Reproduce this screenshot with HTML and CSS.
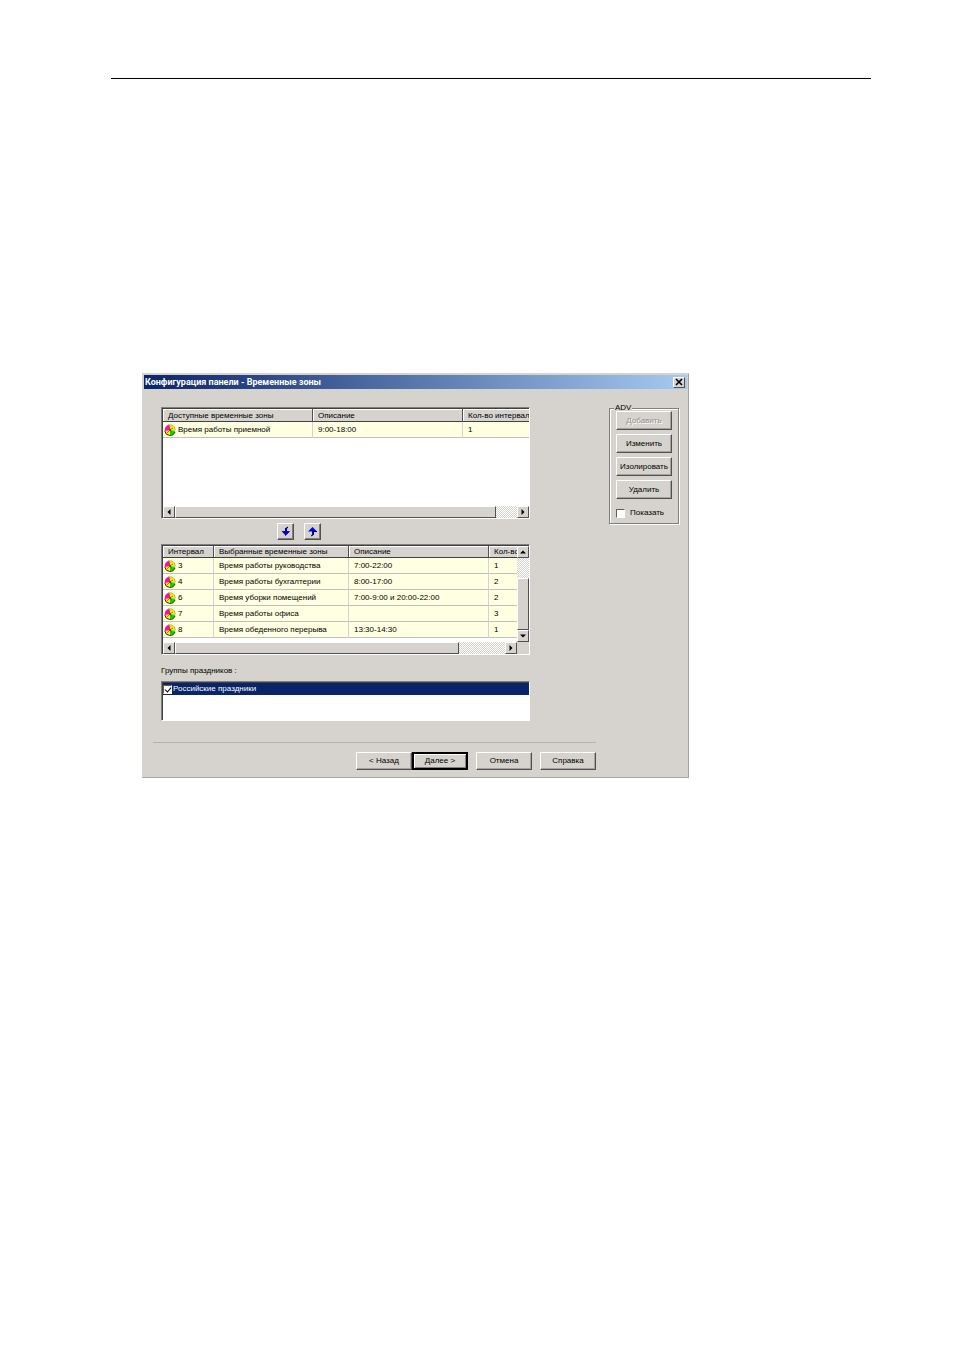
FILE: index.html
```html
<!DOCTYPE html>
<html lang="ru">
  <head>
    <meta charset="UTF-8" />
    <meta name="viewport" content="width=device-width, initial-scale=1.0" />
    <title>Конфигурация панели - Временные зоны</title>
    <link rel="stylesheet" href="styles.css">
  </head>
  <body>
    <!-- shared icons -->
    <svg class="defs" width="0" height="0">
      <symbol id="zone" viewBox="0 0 12 12">
        <circle cx="6" cy="6" r="5.3" fill="#f8f000" />
        <path d="M6 6L.8 7A5.300 5.300 0 0 1 5 .8z" fill="#ff00d8" />
        <path d="M6 6l5.200 1A5.300 5.300 0 0 1 6 11.300z" fill="#00e010" />
        <path d="M5 1l1 5 3-2M6 6l-3 3M6 6l2 3" stroke="#806000" stroke-width=".7" fill="none" />
        <circle cx="6" cy="6" r="1" fill="#902020" />
        <path d="M2 2.500A5.300 5.300 0 0 1 11.300 6" fill="none" stroke="#a09060" stroke-width=".7" />
        <path d="M.8 7A5.300 5.300 0 0 0 11 8" fill="none" stroke="#303018" stroke-width="1" />
      </symbol>
      <symbol id="left" viewBox="0 0 8 8"><path d="M5.500 1v6l-3-3z" /></symbol>
      <symbol id="right" viewBox="0 0 8 8"><path d="M2.500 1v6l3-3z" /></symbol>
      <symbol id="up" viewBox="0 0 8 8"><path d="M1 5.500h6l-3-3z" /></symbol>
      <symbol id="down" viewBox="0 0 8 8"><path d="M1 2.500h6l-3 3z" /></symbol>
    </svg>

    <div class="page">
      <hr class="page-rule">

      <div class="dialog">
        <div class="title-bar">
          <h1>Конфигурация панели - Временные зоны</h1>
          <button class="close-btn" aria-label="Закрыть">
            <svg width="8" height="8" viewBox="0 0 8 8"><path d="M1 1l6 6M7 1L1 7" stroke="#000" stroke-width="1.6" /></svg>
          </button>
        </div>

        <div class="content">
          <div class="lists">
            <div class="list available">
              <div class="view">
                <table>
                  <colgroup><col class="w-name"><col class="w-name"><col></colgroup>
                  <thead>
                    <tr><th>Доступные временные зоны</th><th>Описание</th><th>Кол-во интервал</th></tr>
                  </thead>
                  <tbody>
                    <tr><td class="with-icon"><svg class="zone"><use href="#zone" /></svg>Время работы приемной</td><td>9:00-18:00</td><td>1</td></tr>
                  </tbody>
                </table>
              </div>
              <div class="scroll-h">
                <button aria-label="Влево"><svg><use href="#left" /></svg></button>
                <div class="track"><div class="thumb thumb-wide"></div></div>
                <button aria-label="Вправо"><svg><use href="#right" /></svg></button>
              </div>
            </div>

            <div class="move">
              <button aria-label="Выбрать">
                <svg viewBox="0 0 11 11"><path d="M8 1L5 2.500V5H1.500L5.500 9.500 9.500 5H7V3z" fill="#0000f0" /><path d="M8 1L5.500 2.500V5.500M5 9.500L9.500 5.500" fill="none" stroke="#000050" stroke-width="1" /></svg>
              </button>
              <button aria-label="Вернуть">
                <svg viewBox="0 0 11 11"><path d="M5.500 1L10 5.500H7v3L4.500 10 5 8V5.500H1z" fill="#0000f0" /><path d="M6 5.500h4M6.500 5.500V8.500L4 10" fill="none" stroke="#000050" stroke-width="1" /></svg>
              </button>
            </div>

            <div class="list selected">
              <div class="view">
                <table>
                  <colgroup><col class="w-num"><col class="w-zone"><col class="w-desc"><col></colgroup>
                  <thead>
                    <tr><th>Интервал</th><th>Выбранные временные зоны</th><th>Описание</th><th>Кол-во</th></tr>
                  </thead>
                  <tbody>
                    <tr><td class="with-icon"><svg class="zone"><use href="#zone" /></svg>3</td><td>Время работы руководства</td><td>7:00-22:00</td><td>1</td></tr>
                    <tr><td class="with-icon"><svg class="zone"><use href="#zone" /></svg>4</td><td>Время работы бухгалтерии</td><td>8:00-17:00</td><td>2</td></tr>
                    <tr><td class="with-icon"><svg class="zone"><use href="#zone" /></svg>6</td><td>Время уборки помещений</td><td>7:00-9:00 и 20:00-22:00</td><td>2</td></tr>
                    <tr><td class="with-icon"><svg class="zone"><use href="#zone" /></svg>7</td><td>Время работы офиса</td><td></td><td>3</td></tr>
                    <tr><td class="with-icon"><svg class="zone"><use href="#zone" /></svg>8</td><td>Время обеденного перерыва</td><td>13:30-14:30</td><td>1</td></tr>
                  </tbody>
                </table>
              </div>
              <div class="scroll-v">
                <button aria-label="Вверх"><svg><use href="#up" /></svg></button>
                <div class="track"><div class="thumb"></div></div>
                <button aria-label="Вниз"><svg><use href="#down" /></svg></button>
              </div>
              <div class="scroll-h">
                <button aria-label="Влево"><svg><use href="#left" /></svg></button>
                <div class="track"><div class="thumb thumb-mid"></div></div>
                <button aria-label="Вправо"><svg><use href="#right" /></svg></button>
              </div>
            </div>

            <p class="groups-label">Группы праздников :</p>
            <div class="list groups">
              <label class="group-row"><input type="checkbox" checked>Российские праздники</label>
            </div>
          </div>

          <fieldset class="adv">
            <legend>ADV</legend>
            <button class="btn" disabled>Добавить</button>
            <button class="btn">Изменить</button>
            <button class="btn">Изолировать</button>
            <button class="btn">Удалить</button>
            <label class="show"><input type="checkbox">Показать</label>
          </fieldset>
        </div>

        <div class="footer">
          <div class="wizard">
            <button class="btn">&lt; Назад</button>
            <button class="btn default">Далее &gt;</button>
          </div>
          <button class="btn">Отмена</button>
          <button class="btn">Справка</button>
        </div>
      </div>
    </div>
  </body>
</html>
```

FILE: styles.css
```css
/* styles.css */
* {
  box-sizing: border-box;
}

body {
  margin: 0;
  background: #fff;
  color: #000;
  font-family: "Liberation Sans", Arial, sans-serif;
  font-size: 8px;
  line-height: 12px;
}

.defs {
  position: absolute;
}

.page {
  padding: 78px 83px 0 111px;
}

.page-rule {
  margin: 0 0 294px;
  border: 0;
  border-top: 1px solid #000;
}

.dialog {
  max-width: 547px;
  margin-left: 31px;
  padding: 1px;
  background: #d6d3ce;
  border: 1px solid #d6d3ce;
  border-right-color: #a5a2a0;
  border-bottom-color: #a5a2a0;
}

/* title */
.title-bar {
  display: flex;
  align-items: center;
  justify-content: space-between;
  height: 14px;
  padding: 0 2px 0 1px;
  background: linear-gradient(to right, #0a246a, #a6caf0);
}

.title-bar h1 {
  margin: 0;
  color: #fff;
  font-family: Roboto, sans-serif;
  font-size: 9px;
  line-height: 14px;
  white-space: nowrap;
}

button {
  display: flex;
  align-items: center;
  justify-content: center;
  padding: 0;
  background: #d6d3ce;
  border: 1px solid;
  border-color: #fff #505050 #505050 #fff;
  border-radius: 0;
  color: #000;
  font: inherit;
}

.close-btn {
  width: 12px;
  height: 11px;
}

/* layout */
.content {
  display: grid;
  grid-template-columns: minmax(0, 369px) 70px;
  justify-content: space-between;
  align-items: start;
  padding: 12px 8px 0 17px;
}

.lists {
  padding-top: 6px;
}

/* lists */
.list {
  background: #fff;
  border: 1px solid;
  border-color: #808080 #fff #fff #808080;
  box-shadow: inset 1px 1px #404040;
}

.list .view {
  overflow: hidden;
  margin: 1px 0 0 1px;
}

.available .view {
  height: 97px;
}

table {
  width: 460px;
  table-layout: fixed;
  border-spacing: 0;
}

.w-name {
  width: 150px;
}

.w-num {
  width: 51px;
}

.w-zone {
  width: 135px;
}

.w-desc {
  width: 140px;
}

th,
td {
  padding: 0 5px;
  overflow: hidden;
  text-align: left;
  white-space: nowrap;
}

th {
  height: 12px;
  padding-top: 1px;
  background: #d6d3ce;
  border-right: 1px solid #505050;
  border-bottom: 1px solid #404040;
  box-shadow: inset 1px 1px #fff;
  font-weight: normal;
  line-height: 10px;
}

.available th {
  height: 13px;
  padding-top: 2px;
}

td {
  height: 16px;
  background: #ffffe1;
  border-right: 1px solid #d6d3ce;
  border-bottom: 1px solid #c0c0c0;
  line-height: 15px;
}

.with-icon {
  padding-left: 1px;
}

.zone {
  width: 12px;
  height: 12px;
  margin-right: 2px;
  vertical-align: middle;
}

/* scroll bars */
.scroll-h,
.scroll-v {
  display: flex;
}

.scroll-h {
  height: 12px;
  margin-left: 1px;
}

.scroll-v {
  flex-direction: column;
  width: 12px;
  margin-top: 1px;
}

.scroll-h button,
.scroll-v button {
  flex: none;
  width: 12px;
  height: 12px;
}

.scroll-h svg,
.scroll-v svg {
  width: 8px;
  height: 8px;
}

.track {
  flex: 1;
  background: repeating-conic-gradient(#fff 0 25%, #d6d3ce 0 50%) 0 0 / 2px 2px;
}

.thumb {
  background: #d6d3ce;
  border: 1px solid;
  border-color: #fff #505050 #505050 #fff;
}

.scroll-h .thumb {
  height: 100%;
}

.thumb-wide {
  width: 94%;
}

.thumb-mid {
  width: 86%;
}

.scroll-v .track {
  display: flex;
  flex-direction: column;
  justify-content: flex-end;
}

.scroll-v .thumb {
  height: 72%;
}

.move {
  display: flex;
  justify-content: center;
  gap: 10px;
  padding: 4px 93px 4px 0;
}

.move button {
  width: 17px;
  height: 17px;
  box-shadow: inset -1px -1px #808080;
}

.move svg {
  width: 11px;
  height: 11px;
}

.selected {
  display: grid;
  grid-template-columns: minmax(0, 1fr) 12px;
  grid-template-rows: 97px 12px;
  background: linear-gradient(#d6d3ce, #d6d3ce) right bottom / 12px 12px no-repeat #fff;
}

.groups-label {
  margin: 10px 0 4px;
}

.groups {
  height: 40px;
  padding: 1px 0 0 1px;
}

.group-row {
  display: flex;
  align-items: center;
  height: 12px;
  gap: 1px;
  background: #0a246a;
  color: #fff;
}

input[type="checkbox"] {
  appearance: none;
  flex: none;
  width: 9px;
  height: 9px;
  margin: 0;
  background: #fff;
  border: 1px solid;
  border-color: #606060 #fff #fff #606060;
}

input[type="checkbox"]:checked::before {
  content: "";
  display: block;
  width: 3px;
  height: 5px;
  margin: 0 0 0 2px;
  border: solid #000;
  border-width: 0 1px 1px 0;
  transform: rotate(40deg);
}

/* side group */
.adv {
  display: flex;
  flex-direction: column;
  gap: 4px;
  min-width: 0;
  margin: 4px 0 0;
  padding: 0 6px 4px;
  border: 1px solid #808080;
  box-shadow: 1px 1px #fff, inset 1px 1px #fff;
}

.adv legend {
  height: 6px;
  margin-left: -2px;
  padding: 0 1px;
  background: #d6d3ce;
  line-height: 6px;
}

.btn {
  width: 56px;
  height: 18px;
  box-shadow: inset -1px -1px #a5a2a0;
  white-space: nowrap;
}

.adv .btn {
  height: 19px;
}

.btn:disabled {
  color: #909090;
  text-shadow: 1px 1px #fff;
}

.show {
  display: flex;
  align-items: center;
  gap: 5px;
  margin-top: 4px;
}

/* wizard buttons */
.footer {
  display: flex;
  justify-content: flex-end;
  gap: 8px;
  margin: 21px 91px 0 9px;
  padding: 9px 0 6px;
  border-top: 1px solid #b5b2b0;
}

.wizard {
  display: flex;
}

.default {
  border: 2px solid #000;
  box-shadow: inset 1px 1px #fff, inset -1px -1px #808080;
}
```
